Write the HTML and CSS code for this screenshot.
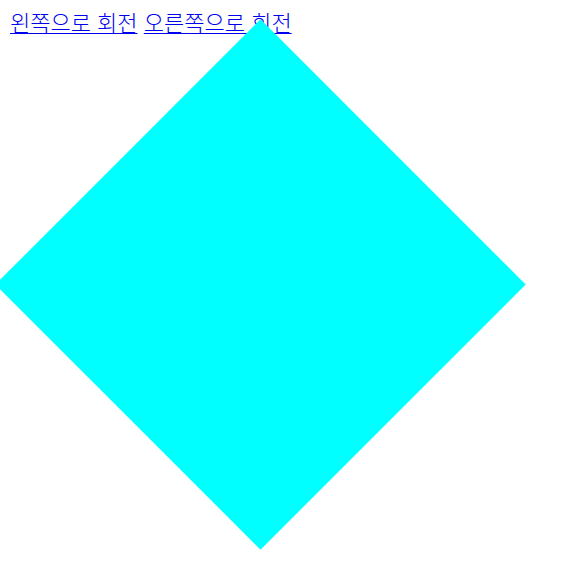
FILE: index.html
```html
<!DOCTYPE html>
<html lang="ko">
<head>
<meta charset="utf-8">
<title>회전</title>
<link rel="stylesheet" href="styles.css">
</head>
<body>
<nav class="controls"><a href="#" class="rotate-link">왼쪽으로 회전</a> <a href="#" class="rotate-link">오른쪽으로 회전</a></nav>
<div class="square"></div>
</body>
</html>
```
FILE: styles.css
```css
html, body {
  background: #ffffff;
}
body {
  margin: 8px;
  font-family: "Noto Sans CJK KR", "Noto Sans", sans-serif;
  font-size: 22px;
  font-weight: 300;
}
.controls {
  padding-left: 2px;
  line-height: 26px;
}
.rotate-link {
  color: #0000ee;
  text-decoration: underline;
}
.square {
  position: absolute;
  left: 72.5px;
  top: 96.5px;
  width: 375px;
  height: 375px;
  background: #00ffff;
  transform: rotate(45deg);
}
```
